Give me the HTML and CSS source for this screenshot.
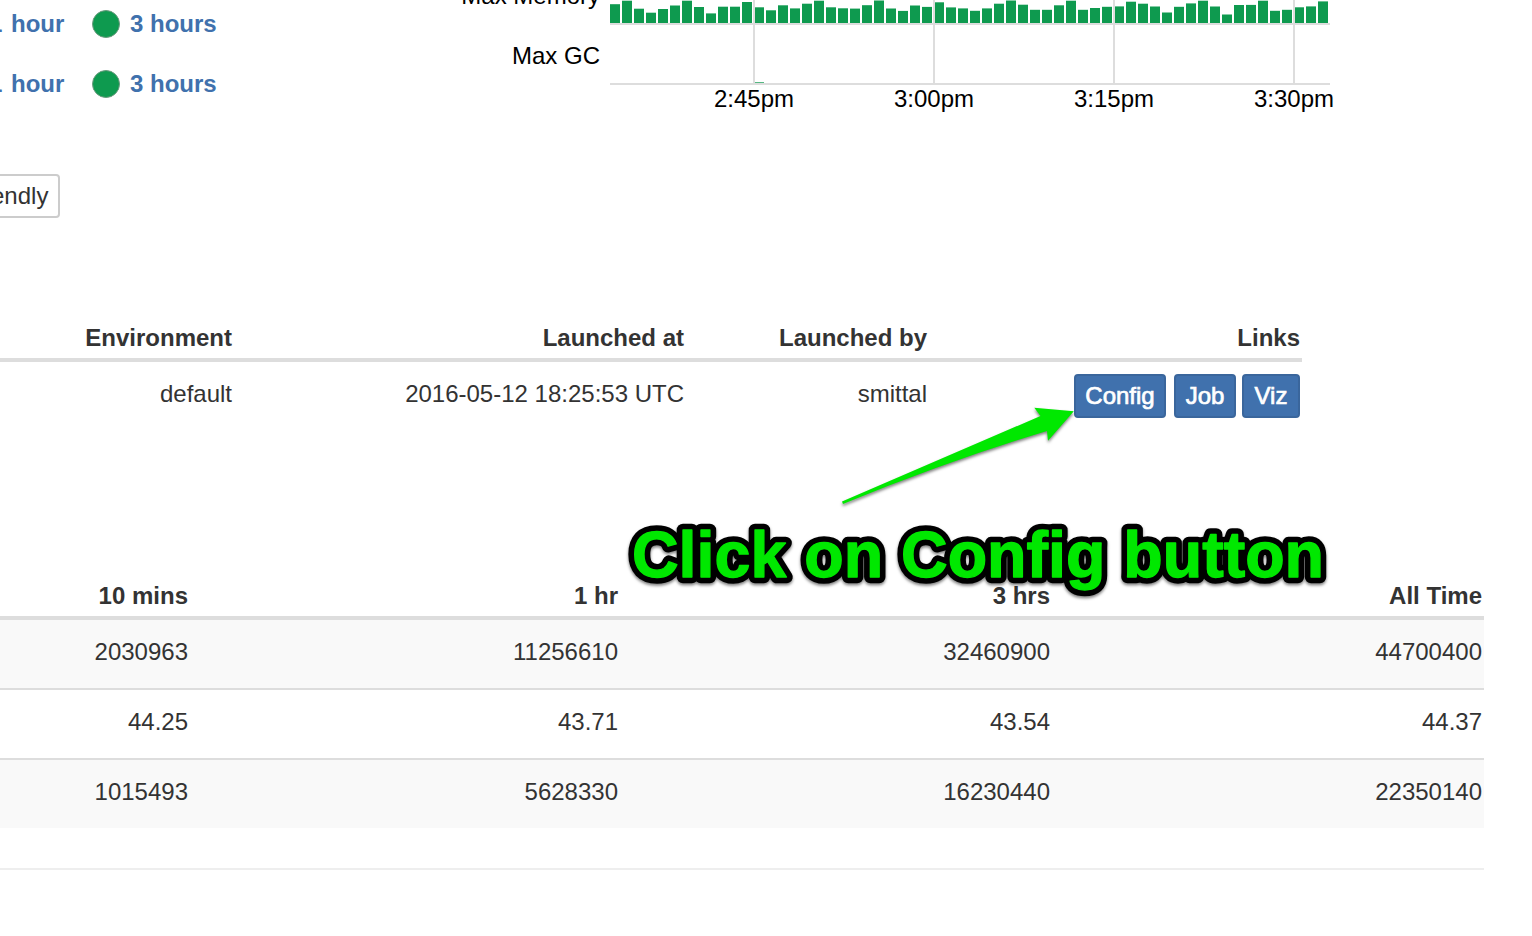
FILE: index.html
```html
<!DOCTYPE html>
<html lang="en">
<head>
<meta charset="utf-8">
<title>Topology</title>
<link rel="stylesheet" href="styles.css">
</head>
<body>
<main class="page">
  <section class="overview">
    <div class="health">
      <div class="health-row"><a class="period first">1 hour</a><span class="dot"></span><a class="period">3 hours</a></div>
      <div class="health-row"><a class="period first">1 hour</a><span class="dot"></span><a class="period">3 hours</a></div>
      <button class="btn-default">endly</button>
    </div>
    <div class="labels">
      <div class="label">Max Memory</div>
      <div class="label">Max GC</div>
    </div>
    <div class="chart">
      <svg class="plot" id="plot" width="720" height="85" viewBox="0 0 720 85"></svg>
      <div class="ticks"><span>2:45pm</span><span>3:00pm</span><span>3:15pm</span><span>3:30pm</span></div>
    </div>
  </section>

  <table class="launch">
    <colgroup><col class="c-env"><col class="c-at"><col class="c-by"><col class="c-links"></colgroup>
    <thead><tr><th>Environment</th><th>Launched at</th><th>Launched by</th><th>Links</th></tr></thead>
    <tbody><tr>
      <td>default</td><td>2016-05-12 18:25:53 UTC</td><td>smittal</td>
      <td><div class="links"><a class="btn config">Config</a><a class="btn job">Job</a><a class="btn viz">Viz</a></div></td>
    </tr></tbody>
  </table>

  <table class="metrics">
    <colgroup><col class="m-10"><col class="m-1h"><col class="m-3h"><col class="m-all"></colgroup>
    <thead><tr><th>10 mins</th><th>1 hr</th><th>3 hrs</th><th>All Time</th></tr></thead>
    <tbody>
      <tr><td>2030963</td><td>11256610</td><td>32460900</td><td>44700400</td></tr>
      <tr><td>44.25</td><td>43.71</td><td>43.54</td><td>44.37</td></tr>
      <tr><td>1015493</td><td>5628330</td><td>16230440</td><td>22350140</td></tr>
    </tbody>
  </table>
  <hr class="rule">

  <svg class="annotation" width="1532" height="936" viewBox="0 0 1532 936">
    <path class="arrow" d="M842 501.5 L1040.5 416 L1034.3 407.7 L1073.8 411.3 L1048 440.8 L1047 431 Q948 461 843 504 Z"/>
    <g class="callout">
      <use class="outline" href="#callout-text"/>
      <g class="face"><text id="callout-text" x="632" y="577" textLength="692" lengthAdjust="spacingAndGlyphs">Click on Config button</text></g>
    </g>
  </svg>
</main>
<script src="chart.js"></script>
</body>
</html>
```
FILE: styles.css
```css
* { box-sizing: border-box; }
body { margin: 0; background: #fff; color: #333; font: 24px/34px "Liberation Sans", Arial, sans-serif; }
.page { position: relative; width: 1532px; height: 936px; overflow: hidden; }

.overview { display: flex; height: 320px; }
.health { width: 440px; }
.health-row { display: flex; align-items: center; height: 60px; margin-left: -11px; }
.health-row:first-child { height: 48px; }
.health-row:nth-child(2) { height: 72px; }
.period { width: 100px; color: #4071ad; font-weight: 700; white-space: nowrap; }
.first { width: 103px; word-spacing: 2px; }
.dot { width: 28px; height: 28px; margin-right: 10px; border: 1px solid #6b9a7e; border-radius: 50%; background: #0e9a4f; }
.btn-default { display: block; width: 71px; height: 44px; margin: 54px 0 0 -11px; padding: 0 11px 0 0; border: 2px solid #ccc; border-radius: 4px; background: #fff; color: #333; font: inherit; text-align: right; }

.labels { width: 160px; margin-top: -34px; color: #000; text-align: right; }
.label { height: 60px; line-height: 60px; }
.chart { width: 732px; margin-left: 10px; color: #000; }
.plot { display: block; }
.ticks { display: flex; width: 720px; padding-left: 54px; line-height: 28px; }
.ticks span { flex: 0 0 180px; text-align: center; }

table { table-layout: fixed; border-spacing: 0; text-align: right; }
th, td { padding: 0 2px 0 0; }
th { height: 42px; padding-top: 1px; border-bottom: 4px solid #ddd; vertical-align: top; white-space: nowrap; }
.launch { width: 1302px; }
.launch td { height: 68px; padding-top: 15px; vertical-align: top; }
.launch td:last-child { padding-top: 12px; }
.c-env { width: 234px; }
.c-at { width: 452px; }
.c-by { width: 243px; }
.c-links { width: 373px; }
.links { display: flex; justify-content: flex-end; gap: 8px; }
.btn { height: 44px; border: 2px solid #3a669c; border-radius: 4px; background: #4071ad; color: #fff; line-height: 40px; text-align: center; -webkit-text-stroke: 0.7px #fff; }
.config { width: 92px; }
.job { width: 62px; }
.viz { width: 58px; margin-left: -2px; }

.metrics { width: 1484px; margin-top: 148px; }
.m-10 { width: 190px; }
.m-1h { width: 430px; }
.m-3h { width: 432px; }
.m-all { width: 432px; }
.metrics td { height: 70px; padding-top: 15px; border-top: 2px solid #ddd; vertical-align: top; }
.metrics tbody tr:first-child td { height: 68px; border-top: 0; }
.metrics tbody tr:nth-child(odd) { background: #f9f9f9; }
.rule { width: 1484px; height: 2px; margin: 40px 0 0; border: 0; background: #eee; }

.annotation { position: absolute; top: 0; left: 0; pointer-events: none; }
.arrow { fill: #00e800; filter: drop-shadow(0 2px 1.5px rgba(0, 0, 0, 0.5)); }
.callout { font-size: 64px; font-weight: 700; stroke-linejoin: round; filter: drop-shadow(0 2px 1.5px rgba(0, 0, 0, 0.5)); }
.outline { fill: #000; stroke: #000; stroke-width: 12.5px; }
.face { fill: #00e800; stroke: #00e800; stroke-width: 1.3px; }

.bar { fill: #0e9a4f; }
.faint { opacity: 0.7; }
.grid { fill: #ddd; }
```
FILE: chart.js
```js
// Top edge of each one-minute memory bar, in plot pixels
const tops = [4.2, 0.7, 8.7, 12.7, 9, 5.5, 0.7, 7, 13.4, 6.7, 6.7, 2, 7.3, 10.3, 5.3, 8.4, 3.7, 0.7, 7.3, 8.3,
  8.6, 5.2, 0.5, 8.5, 10.9, 5.5, 6.9, 2.3, 7.4, 8.4, 10.8, 8.4, 3.7, 0.5, 4.7, 9.8, 9.8, 5.3, 0.7, 9.8,
  8, 6.8, 6.4, 1.7, 3.7, 6.5, 12.5, 6.8, 3.4, 0.7, 6.5, 14.5, 5, 4.9, 0.7, 10.8, 9.8, 7.3, 6.4, 1.4];
const plot = document.getElementById('plot');
function rect(x, y, width, height, cls) {
  const r = document.createElementNS('http://www.w3.org/2000/svg', 'rect');
  Object.entries({ x, y, width, height, class: cls }).forEach(([k, v]) => r.setAttribute(k, v));
  plot.appendChild(r);
}
tops.forEach((t, i) => rect(i * 12, t, 10, 23 - t, 'bar'));
rect(144, 82, 10, 1, 'bar faint');
[143, 323, 503, 683].forEach(x => rect(x, 0, 2, 83, 'grid'));
[23, 83].forEach(y => rect(0, y, 720, 2, 'grid'));
```
